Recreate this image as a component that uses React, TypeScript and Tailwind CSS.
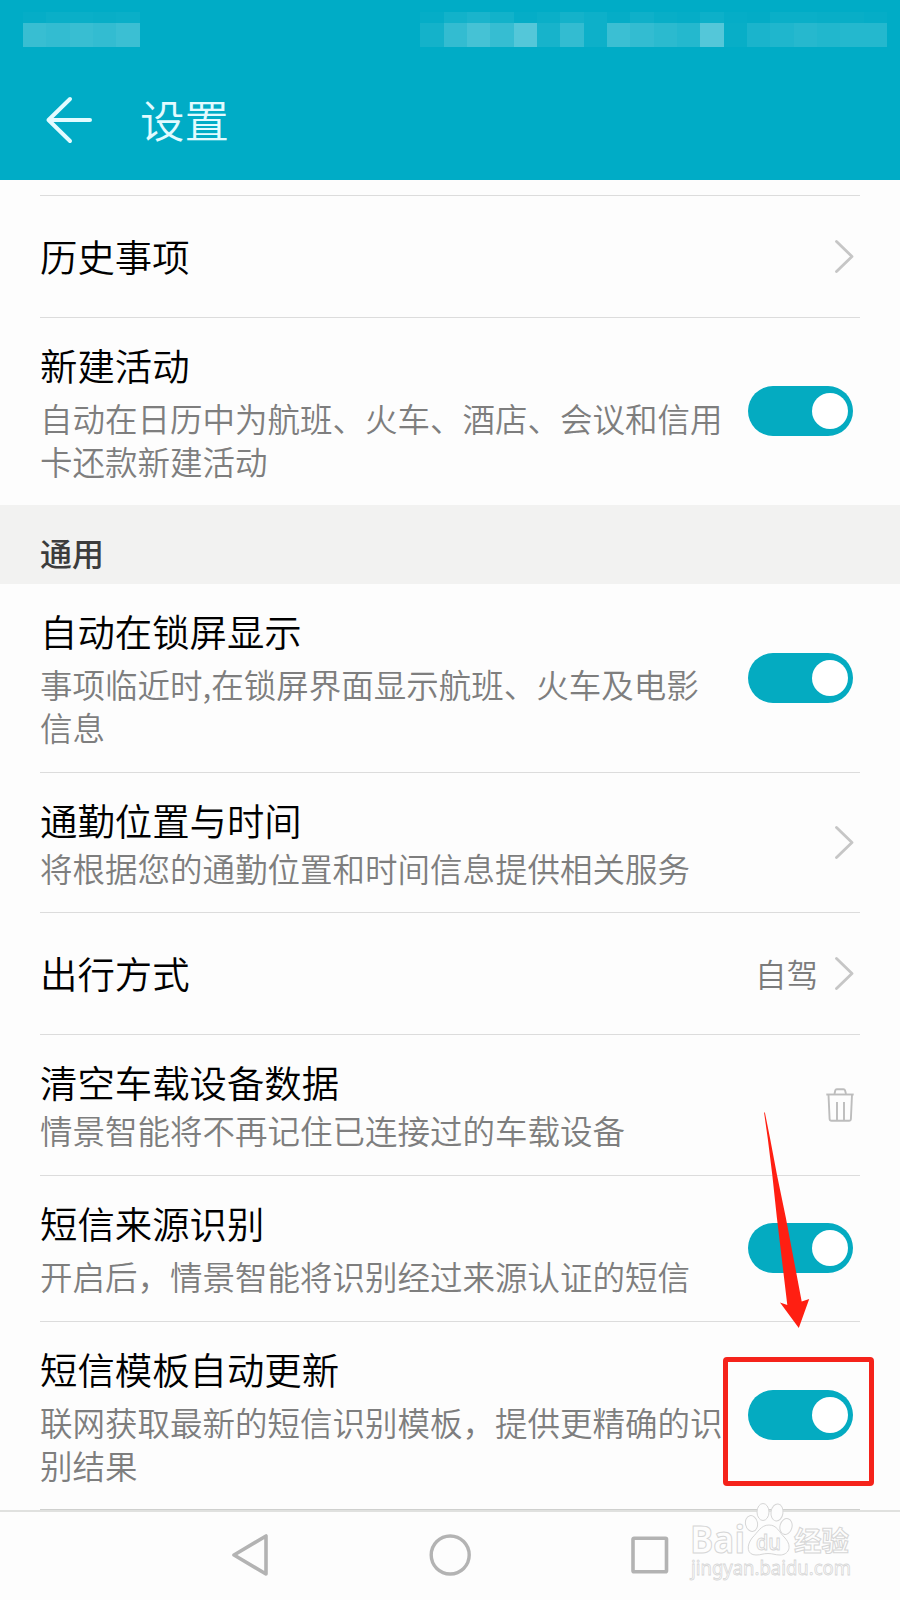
import React from 'react';

interface RowProps {
  title: string;
  lines?: string[];
  className: string;
  descClass?: string;
  last?: boolean;
  children: React.ReactNode;
}

const statusLeft = [
  ['bg-white/2', 'bg-white/22'],
  ['bg-white/4', 'bg-white/20'],
  ['bg-white/4', 'bg-white/22'],
  ['bg-white/3', 'bg-white/20'],
  ['bg-white/4', 'bg-white/23'],
];

const statusRight = [
  ['bg-white/2', 'bg-white/8'],
  ['bg-white/7', 'bg-white/20'],
  ['bg-white/10', 'bg-white/27'],
  ['bg-white/7', 'bg-white/21'],
  ['bg-white/2', 'bg-white/33'],
  ['bg-white/4', 'bg-white/9'],
  ['bg-white/8', 'bg-white/20'],
  ['bg-white/5', 'bg-white/5'],
  ['bg-white/2', 'bg-white/23'],
  ['bg-white/6', 'bg-white/20'],
  ['bg-white/3', 'bg-white/17'],
  ['bg-white/2', 'bg-white/14'],
  ['bg-white/5', 'bg-white/33'],
  ['bg-white/2', 'bg-white/3'],
  ['bg-white/1', 'bg-white/10'],
  ['bg-white/4', 'bg-white/12'],
  ['bg-white/4', 'bg-white/15'],
  ['bg-white/3', 'bg-white/13'],
  ['bg-white/3', 'bg-white/14'],
  ['bg-white/2', 'bg-white/14'],
];

function StatusBlocks({ cells }: { cells: string[][] }) {
  return (
    <div className="flex">
      {cells.map(([top, bottom], i) => (
        <div key={i} className="w-[23.333px]">
          <div className={`h-[11px] ${top}`} />
          <div className={`h-6 ${bottom}`} />
        </div>
      ))}
    </div>
  );
}

function Toggle() {
  return (
    <button className="mb-px flex h-[50px] w-[105px] shrink-0 cursor-pointer items-center justify-end rounded-full bg-[#04abc1] pr-[5px]">
      <span className="size-[36px] rounded-full bg-white" />
    </button>
  );
}

function Chevron() {
  return (
    <svg className="-mr-px h-[34px] w-5 shrink-0" viewBox="0 0 20 34" fill="none" stroke="#c6c6c6" strokeWidth="2.8">
      <path d="M2.5 1.5 L18 16.5 L2.5 31.5" strokeLinecap="round" strokeLinejoin="round" />
    </svg>
  );
}

function Trash() {
  return (
    <svg className="-mr-px h-[34px] w-7 shrink-0" viewBox="0 0 28 34" fill="none" stroke="#bdbdbd" strokeWidth="1.9">
      <path d="M0.3 6.5 H27.7" />
      <path d="M8.5 6 L9.3 2.2 Q9.6 1.2 10.8 1.2 H17.5 Q18.7 1.2 19 2.2 L20 6" />
      <path d="M2.5 6.5 L3.6 31 Q3.8 32.8 5.5 32.8 H23 Q24.7 32.8 24.9 31 L26 6.5" />
      <path d="M11 14 V32.5 M18 14 V32.5" />
    </svg>
  );
}

function Row({ title, lines = [], className, descClass = 'mt-[7px]', last, children }: RowProps) {
  return (
    <div className={`mx-10 flex border-b pr-[7px] ${last ? 'border-[#cfd0ce]' : 'border-[#dcdcdc]'} ${className}`}>
      <div className={`flex-1 whitespace-nowrap ${lines.length ? 'pt-[22px]' : 'self-center pb-0.5'}`}>
        <div className="text-[37.4px] leading-[50px] font-[350] text-black">{title}</div>
        {lines.length > 0 && (
          <div className={`text-[32.5px] leading-[42.6px] font-[350] text-[#7e7e7e] ${descClass}`}>
            {lines.map((line) => (
              <div key={line}>{line}</div>
            ))}
          </div>
        )}
      </div>
      <div className="flex w-0 items-center justify-end">{children}</div>
    </div>
  );
}

function Watermark() {
  return (
    <svg className="absolute top-[1500px] left-[685px] h-[90px] w-[172px] overflow-visible" viewBox="0 0 172 90" fill="#fdfdfd" stroke="#d6d6d6" strokeWidth="1">
      <text x="5" y="53" fontSize="37" fontWeight="700" textLength="55" lengthAdjust="spacingAndGlyphs" fontFamily="Open Sans, sans-serif">Bai</text>
      <ellipse cx="66.5" cy="23.5" rx="6" ry="8" transform="rotate(-12 66.5 23.5)" />
      <ellipse cx="78" cy="12" rx="6" ry="8.5" />
      <ellipse cx="92" cy="12.5" rx="6" ry="8.5" transform="rotate(8 92 12.5)" />
      <ellipse cx="101" cy="26.5" rx="6" ry="8" transform="rotate(15 101 26.5)" />
      <path d="M84 25 C92 25 94 32 100 38 C108 47 103 55 95 55 C90 55 88 53.5 83 53.5 C78 53.5 76 55 71 55 C62 55 61 46 67 38 C73 32 76 25 84 25 Z" />
      <text x="71" y="50" fontSize="22" fontWeight="600" textLength="25" lengthAdjust="spacingAndGlyphs" fontFamily="Open Sans, sans-serif">du</text>
      <text x="109" y="51" fontSize="27.5" fontWeight="700" fontFamily="Noto Sans CJK SC, sans-serif">经验</text>
      <text x="6" y="75" fontSize="20" strokeWidth="0.8" textLength="160" lengthAdjust="spacingAndGlyphs" fontFamily="Noto Sans, sans-serif">jingyan.baidu.com</text>
    </svg>
  );
}

export default function App() {
  return (
    <div className="relative flex h-[1600px] w-[900px] flex-col overflow-hidden bg-[#fdfdfd] font-['Noto_Sans_CJK_SC',sans-serif]">
      <header className="h-[180px] bg-[#00acc6] pt-3">
        <div className="flex justify-between pr-[13px] pl-[23px]">
          <StatusBlocks cells={statusLeft} />
          <StatusBlocks cells={statusRight} />
        </div>
        <div className="mt-[13px] flex h-[120px] items-center pl-[44px] text-[#e2fbff]">
          <svg className="h-12 w-12" viewBox="0 0 48 48" fill="none" stroke="currentColor" strokeWidth="4" strokeLinecap="round" strokeLinejoin="round">
            <path d="M46 24 H4.5 M26 3 L4.5 24 L26 45" />
          </svg>
          <h1 className="mb-0.5 ml-12 text-[44.5px] leading-[60px] font-[350]">设置</h1>
        </div>
      </header>

      <main>
        <div className="mx-10 h-4 border-b border-[#dcdcdc]" />
        <Row title="历史事项" className="h-[122px]">
          <Chevron />
        </Row>
        <Row
          title="新建活动"
          lines={['自动在日历中为航班、火车、酒店、会议和信用', '卡还款新建活动']}
          className="h-[187px] border-b-0"
        >
          <Toggle />
        </Row>

        <div className="flex h-[79px] items-end bg-[#f2f2f1] pb-[7px] pl-10 text-[32px] leading-[50px] font-medium text-[#3c3c3c]">通用</div>

        <Row
          title="自动在锁屏显示"
          lines={['事项临近时,在锁屏界面显示航班、火车及电影', '信息']}
          className="h-[189px]"
        >
          <Toggle />
        </Row>
        <Row title="通勤位置与时间" lines={['将根据您的通勤位置和时间信息提供相关服务']} className="h-[140px]" descClass="mt-0.5">
          <Chevron />
        </Row>
        <Row title="出行方式" className="h-[122px]">
          <span className="mt-px mr-4 text-[31.5px] font-[350] whitespace-nowrap text-[#7b7b7b]">自驾</span>
          <Chevron />
        </Row>
        <Row title="清空车载设备数据" lines={['情景智能将不再记住已连接过的车载设备']} className="h-[141px]" descClass="mt-0.5">
          <Trash />
        </Row>
        <Row title="短信来源识别" lines={['开启后，情景智能将识别经过来源认证的短信']} className="h-[146px]">
          <Toggle />
        </Row>
        <Row
          title="短信模板自动更新"
          lines={['联网获取最新的短信识别模板，提供更精确的识', '别结果']}
          className="h-[188px]"
          last
        >
          <Toggle />
        </Row>
      </main>

      <nav className="flex flex-1 items-center justify-between border-t-2 border-[#e0e1df] pr-[229px] pb-0.5 pl-[230px]">
        <svg className="size-11" viewBox="0 0 44 44" fill="none" stroke="#b3b3b3" strokeWidth="3.6">
          <path d="M4 22 L36 3 V41 Z" strokeLinejoin="round" />
        </svg>
        <svg className="size-11" viewBox="0 0 44 44" fill="none" stroke="#b3b3b3" strokeWidth="3.4">
          <circle cx="21.2" cy="22" r="19" />
        </svg>
        <svg className="size-11" viewBox="0 0 44 44" fill="none" stroke="#b3b3b3" strokeWidth="3.6">
          <rect x="6" y="5.2" width="33.5" height="33.5" rx="1" />
        </svg>
      </nav>

      <Watermark />

      {/* highlight on the last toggle */}
      <div className="absolute top-[1357px] left-[723px] h-[129px] w-[151px] rounded-[4px] border-5 border-[#f5231b]" />
      <svg className="absolute top-[1110px] left-[760px] h-[220px] w-[55px]" viewBox="0 0 55 220" fill="#ff1f12">
        <path d="M4 2 L5 3 L10 28 L17 65 L25.7 107 L41.7 191.5 L49.2 189 L38.8 218 L20 192.5 L27.3 195 L16.8 107 L12.3 65 L7.7 28 Z" />
      </svg>
    </div>
  );
}
